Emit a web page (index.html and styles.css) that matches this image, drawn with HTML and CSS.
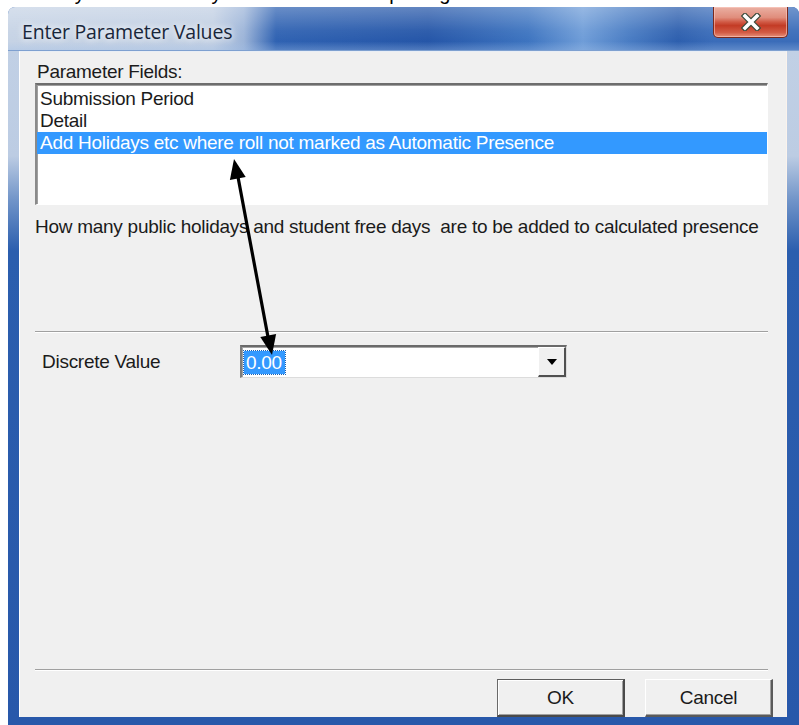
FILE: index.html
```html
<!DOCTYPE html>
<html lang="en">
<head>
<meta charset="utf-8">
<title>Enter Parameter Values</title>
<link rel="stylesheet" href="styles.css">
</head>
<body>
  <div class="page-heading"><span>Holidays and Free Days in Attendance Reporting</span></div>

  <div class="window">
    <div class="titlebar">
      <span class="title">Enter Parameter Values</span>
      <button class="close" type="button" aria-label="Close">
        <svg width="20" height="18" viewBox="0 0 20 18">
          <path d="M4 3 L16 15 M16 3 L4 15" stroke="#3b4a3a" stroke-width="6" stroke-linecap="square" fill="none"/>
          <path d="M4 3 L16 15 M16 3 L4 15" stroke="#ffffff" stroke-width="3.6" stroke-linecap="square" fill="none"/>
        </svg>
      </button>
    </div>

    <div class="frame">
      <div class="client">
        <div class="field-label">Parameter Fields:</div>
        <ul class="listbox">
          <li>Submission Period</li>
          <li>Detail</li>
          <li class="selected">Add Holidays etc where roll not marked as Automatic Presence</li>
        </ul>
        <p class="description">How many public holidays and student free days&nbsp; are to be added to calculated presence</p>
        <div class="separator"></div>

        <div class="value-row">
          <span class="value-label">Discrete Value</span>
          <div class="combo">
            <span class="combo-text"><span class="combo-selection">0.00</span></span>
            <span class="combo-drop">
              <svg width="10" height="6" viewBox="0 0 10 6"><path d="M0 0 H10 L5 6 Z" fill="#000"/></svg>
            </span>
          </div>
        </div>

        <div class="spacer"></div>
        <div class="separator"></div>

        <div class="buttons">
          <button class="btn btn-default" type="button">OK</button>
          <button class="btn" type="button">Cancel</button>
        </div>
      </div>
    </div>
  </div>

  <!-- hand-drawn double-headed pointer linking the selected field to its value -->
  <svg class="pointer" width="799" height="725" viewBox="0 0 799 725">
    <line x1="237.8" y1="176" x2="268.2" y2="338" stroke="#000" stroke-width="3.2"/>
    <polygon points="234,159 245.7,177.1 229.9,180.1" fill="#000"/>
    <polygon points="272,355 276.1,333.9 260.3,336.9" fill="#000"/>
  </svg>
</body>
</html>
```

FILE: styles.css
```css
* {
  box-sizing: border-box;
}

html, body {
  margin: 0;
  padding: 0;
  background: #ffffff;
}

body {
  width: 799px;
  height: 725px;
  overflow: hidden;
  position: relative;
  font-family: "Liberation Sans", Arial, sans-serif;
  font-size: 19px;
  line-height: 22px;
  letter-spacing: -0.27px;
  color: #1b1b1b;
}

/* heading of the surrounding document, mostly scrolled out of view */
.page-heading {
  height: 7px;
  overflow: hidden;
  padding-left: 18px;
  font-size: 20px;
  line-height: 20px;
  letter-spacing: 0;
  white-space: nowrap;
  color: #000;
}

.page-heading span {
  display: block;
  margin-top: -17px;
}

/* ---------- window chrome ---------- */
.window {
  margin-left: 8px;
  width: 791px;
  border-radius: 7px 7px 0 0;
  overflow: hidden;
  background: #2a5cad;
}

.titlebar {
  height: 44px;
  display: flex;
  justify-content: space-between;
  align-items: flex-start;
  background:
    linear-gradient(to bottom, rgba(255,255,255,0.28) 0, rgba(255,255,255,0.05) 55%, rgba(255,255,255,0) 80%, rgba(160,190,230,0.35) 100%),
    linear-gradient(to right, #c6d3e5 0, #c1cfe3 205px, #9cb4d8 236px, #2f62b2 268px, #2556a8 420px, #3d74c0 520px, #6f9dd8 575px, #4a7dc4 620px, #2d5fae 670px, #3a6cb9 705px);
  border-bottom: 1px solid #7ea0d0;
}

.title {
  padding: 13px 0 0 14px;
  font-family: "Open Sans", "Noto Sans", sans-serif;
  font-size: 19.5px;
  line-height: 24px;
  font-weight: 500;
  letter-spacing: -0.2px;
  color: #18263a;
  text-shadow: 0 0 6px rgba(255,255,255,0.9), 0 0 10px rgba(255,255,255,0.7);
}

.close {
  width: 75px;
  height: 31px;
  margin-right: 11px;
  padding: 0;
  border: 1px solid #7a2a1e;
  border-top: none;
  border-radius: 0 0 5px 5px;
  background: linear-gradient(to bottom, #eab0a3 0, #e08d7c 35%, #d05a45 50%, #c33b25 62%, #d35c45 85%, #e7907a 100%);
  box-shadow: inset 0 0 0 1px rgba(255,210,200,0.55);
  display: flex;
  align-items: center;
  justify-content: center;
}

.frame {
  padding: 0 12px 8px 11px;
  background: linear-gradient(to bottom, #c1d0e5 0, #bccce3 105px, #6f93c8 150px, #2b5eae 200px, #2858aa 100%);
}

/* ---------- dialog client area ---------- */
.client {
  height: 666px;
  display: flex;
  flex-direction: column;
  padding: 9px 18px 0 15px;
  background: #f0f0f0;
  border-top: 1px solid #e9eef5;
  border-left: 1px solid #ffffff;
  border-right: 1px solid #fbf3ec;
}

.field-label {
  padding-left: 2px;
}

.listbox {
  margin: 0;
  height: 122px;
  padding: 3px 0 0 0;
  list-style: none;
  background: #ffffff;
  border-style: solid;
  border-width: 2px 1px 1px 2px;
  border-color: #6d6d6d #ffffff #ffffff #8a8a8a;
  box-shadow: inset 1px 1px 0 #a0a0a0;
}

.listbox li {
  height: 22px;
  padding-left: 3px;
  white-space: nowrap;
}

.listbox li.selected {
  background: #3399ff;
  color: #ffffff;
}

.description {
  margin: 11px 0 0 0;
  white-space: nowrap;
}

.separator {
  height: 2px;
  border-top: 1px solid #a0a0a0;
  border-bottom: 1px solid #ffffff;
}

.description + .separator {
  margin-top: 93px;
}

.value-row {
  margin-top: 12px;
  padding-left: 7px;
  display: grid;
  grid-template-columns: 198px 327px;
  align-items: center;
}

.combo {
  height: 33px;
  display: flex;
  background: #ffffff;
  border-style: solid;
  border-width: 2px 1px 1px 2px;
  border-color: #6a6a6a #dcdcdc #dcdcdc #7c7c7c;
  box-shadow: inset 1px 1px 0 #a5a5a5;
}

.combo-text {
  flex: 1;
  display: flex;
  align-items: center;
  padding-left: 2px;
}

.combo-selection {
  display: inline-block;
  height: 23px;
  padding: 0 3px 0 2px;
  background: #3399ff;
  color: #ffffff;
  outline: 1px dotted #1a5fb0;
  line-height: 23px;
}

.combo-drop {
  width: 28px;
  display: flex;
  align-items: center;
  justify-content: center;
  background: #f0f0f0;
  border-style: solid;
  border-width: 1px 2px 2px 1px;
  border-color: #ffffff #505050 #505050 #ffffff;
}

.spacer {
  flex: 1;
}

.buttons {
  margin: 8px -5px 0 0;
  display: flex;
  justify-content: flex-end;
  gap: 20px;
}

.btn {
  width: 128px;
  height: 38px;
  padding: 0;
  font: inherit;
  letter-spacing: inherit;
  color: #1b1b1b;
  background: #f0f0f0;
  border-style: solid;
  border-width: 1px 2px 2px 1px;
  border-color: #ffffff #5a5a5a #5a5a5a #ffffff;
  box-shadow: inset -1px -1px 0 #a0a0a0;
}

.btn-default {
  border-color: #5e5e5e #4a4a4a #4a4a4a #6a6a6a;
  box-shadow: inset 1px 1px 0 #ffffff, inset -1px -1px 0 #a0a0a0;
}

/* ---------- annotation overlay ---------- */
.pointer {
  position: absolute;
  left: 0;
  top: 0;
  pointer-events: none;
}
```
